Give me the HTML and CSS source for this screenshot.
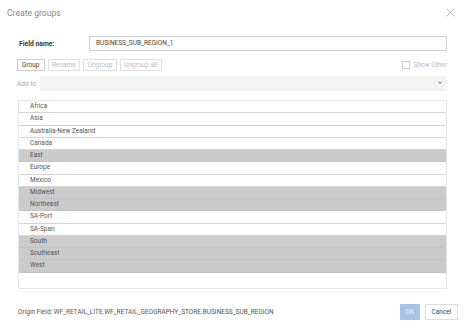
FILE: index.html
```html
<!DOCTYPE html>
<html>
<head>
<meta charset="utf-8">
<link rel="stylesheet" href="styles.css">
</head>
<body>
<div class="dialog">
  <div class="header">
    <div class="title">Create groups</div>
    <svg class="close" width="9" height="9" viewBox="0 0 9 9"><path d="M0.5 0.5 L8.5 8.5 M8.5 0.5 L0.5 8.5" stroke="#aaa" stroke-width="0.8" fill="none"/></svg>
  </div>
  <div class="field-row">
    <div class="field-label">Field name:</div>
    <div class="field-input">BUSINESS_SUB_REGION_1</div>
  </div>
  <div class="toolbar">
    <div class="btn active">Group</div>
    <div class="btn">Rename</div>
    <div class="btn">Ungroup</div>
    <div class="btn">Ungroup all</div>
    <div class="spacer"></div>
    <div class="check"></div>
    <div class="check-label">Show Other</div>
  </div>
  <div class="addto-row">
    <div class="addto-label">Add to</div>
    <div class="select"><span class="arrow"></span></div>
  </div>
  <div class="list">
    <div class="row">Africa</div>
    <div class="row">Asia</div>
    <div class="row">Australia-New Zealand</div>
    <div class="row">Canada</div>
    <div class="row sel">East</div>
    <div class="row">Europe</div>
    <div class="row">Mexico</div>
    <div class="row sel">Midwest</div>
    <div class="row sel">Northeast</div>
    <div class="row">SA-Port</div>
    <div class="row">SA-Span</div>
    <div class="row sel">South</div>
    <div class="row sel">Southeast</div>
    <div class="row sel">West</div>
  </div>
  <div class="footer">
    <div class="origin">Origin Field: WF_RETAIL_LITE.WF_RETAIL_GEOGRAPHY_STORE.BUSINESS_SUB_REGION</div>
    <div class="ok">OK</div>
    <div class="cancel">Cancel</div>
  </div>
</div>
</body>
</html>
```
FILE: styles.css
```css
* { box-sizing: border-box; }
html, body { margin: 0; padding: 0; background: #fff; }
body { font-family: Roboto, "Liberation Sans", sans-serif; font-size: 6.5px; color: #555; }
.dialog { width: 467px; height: 327px; padding: 0 9px 0 17px; display: flex; flex-direction: column; }
.header { display: flex; align-items: center; justify-content: space-between; height: 27px; margin-left: -10px; padding-bottom: 2px; }
.title { font-size: 8.6px; color: #8a8a8a; }
.close { margin-right: 3px; }
.field-row { display: flex; align-items: center; margin-top: 9px; height: 15px; margin-right: 11px; }
.field-label { width: 72px; padding-left: 2px; font-weight: bold; color: #333; font-size: 6.8px; }
.field-input { flex: 1; height: 15px; border: 1px solid #ccc; padding-left: 6px; line-height: 13px; color: #444; }
.toolbar { display: flex; align-items: center; margin-top: 8px; height: 12px; margin-right: 11px; }
.btn { height: 12px; border: 1px solid #e0e0e0; padding: 0 3.5px; line-height: 10px; color: #bbb; margin-right: 3px; }
.btn.active { color: #444; border-color: #ccc; padding: 0 4px; }
.spacer { flex: 1; }
.check { width: 8px; height: 8px; border: 1px solid #ccc; margin-right: 4px; }
.check-label { color: #bbb; }
.addto-row { display: flex; align-items: center; margin-top: 5px; height: 15px; margin-right: 11px; }
.addto-label { width: 23px; color: #aaa; }
.select { flex: 1; height: 15px; background: #f3f3f3; position: relative; }
.arrow { position: absolute; right: 5px; top: 6px; width: 0; height: 0; border-left: 2px solid transparent; border-right: 2px solid transparent; border-top: 2.5px solid #888; }
.list { margin-top: 9px; margin-left: 1px; margin-right: 11px; height: 189px; border: 1px solid #e6e6e6; display: flex; flex-direction: column; }
.row { height: 12.25px; line-height: 11px; padding-left: 11px; border-bottom: 1px solid #d4d4d4; color: #555; flex: none; }
.row.sel { background: #cbcbcb; border-bottom-color: #c4c4c4; }
.footer { display: flex; align-items: center; margin-top: 15px; height: 16px; }
.origin { flex: 1; padding-left: 1px; color: #555; }
.ok { width: 20px; height: 16px; background: #a9c4e2; color: #e8f0f8; text-align: center; line-height: 16px; margin-right: 5px; }
.cancel { width: 33px; height: 16px; border: 1px solid #ddd; text-align: center; line-height: 14px; color: #444; }
```
